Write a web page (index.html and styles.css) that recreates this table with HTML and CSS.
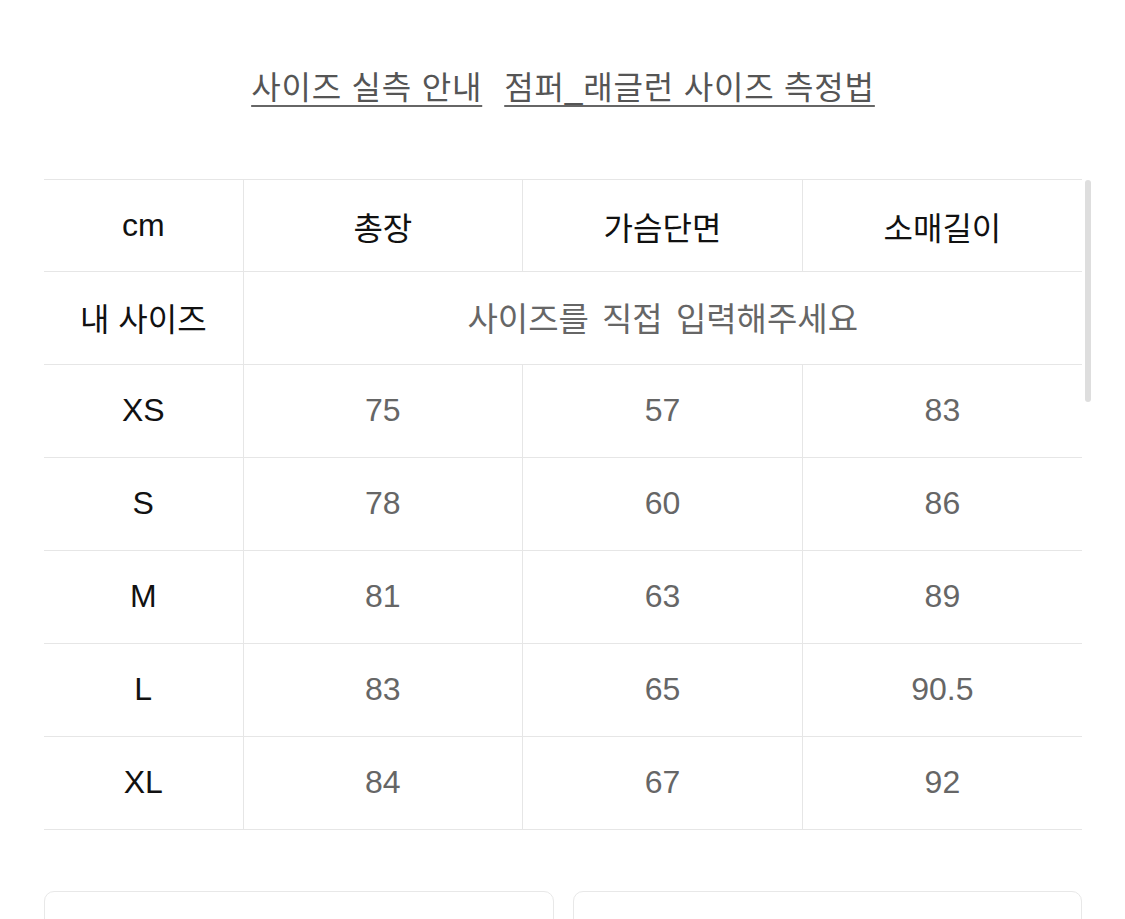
FILE: index.html
```html
<!DOCTYPE html>
<html lang="ko">
<head>
<meta charset="utf-8">
<title>사이즈 실측 안내</title>
<link rel="stylesheet" href="styles.css">
</head>
<body>
<div class="page">
  <nav class="links">
    <a class="link" href="#">사이즈 실측 안내</a>
    <a class="link" href="#">점퍼_래글런 사이즈 측정법</a>
  </nav>
  <div class="table-wrap">
    <table class="size-table">
      <colgroup>
        <col class="col-label">
        <col class="col-val">
        <col class="col-val">
        <col class="col-val">
      </colgroup>
      <tr class="head">
        <th>cm</th><th>총장</th><th>가슴단면</th><th>소매길이</th>
      </tr>
      <tr>
        <th>내 사이즈</th><td colspan="3" class="input">사이즈를 직접 입력해주세요</td>
      </tr>
      <tr><th>XS</th><td>75</td><td>57</td><td>83</td></tr>
      <tr><th>S</th><td>78</td><td>60</td><td>86</td></tr>
      <tr><th>M</th><td>81</td><td>63</td><td>89</td></tr>
      <tr><th>L</th><td>83</td><td>65</td><td>90.5</td></tr>
      <tr><th>XL</th><td>84</td><td>67</td><td>92</td></tr>
    </table>
    <div class="scrollbar"></div>
  </div>
  <div class="boxes">
    <div class="box"></div>
    <div class="box"></div>
  </div>
</div>
</body>
</html>
```

FILE: styles.css
```css
html, body {
  margin: 0;
  padding: 0;
  background: #ffffff;
}
body {
  font-family: "Liberation Sans", "Noto Sans CJK KR", sans-serif;
  overflow: hidden;
}
.page {
  padding: 0 43px 0 44px;
}
.links {
  display: flex;
  justify-content: center;
  gap: 22px;
  padding-top: 65px;
  height: 114px;
  box-sizing: content-box;
  line-height: 46px;
}
.link {
  font-size: 32px;
  color: #555555;
  text-decoration: underline;
  text-decoration-color: #666666;
  text-decoration-thickness: 2px;
  text-underline-offset: 6px;
  letter-spacing: 0.8px;
}
.table-wrap {
  position: relative;
}
.size-table {
  width: 1038px;
  border-collapse: collapse;
  table-layout: fixed;
}
.col-label {
  width: 199px;
}
.size-table th,
.size-table td {
  height: 90px;
  padding: 0 0 2px;
  text-align: center;
  vertical-align: middle;
  font-size: 32px;
  font-weight: normal;
  border: 1px solid #e6e6e6;
}
.size-table tr:first-child > * {
  height: 91px;
  padding: 0;
}
.size-table th {
  color: #111111;
}
.size-table td {
  color: #666666;
}
.size-table tr > :first-child {
  border-left: none;
}
.size-table tr > :last-child {
  border-right: none;
}
.size-table .input {
  font-size: 33px;
  word-spacing: 4px;
}
.scrollbar {
  position: absolute;
  right: -9px;
  top: 1px;
  width: 6px;
  height: 222px;
  border-radius: 3px;
  background: #dedede;
}
.boxes {
  display: grid;
  grid-template-columns: 1fr 1fr;
  gap: 19px;
  margin-top: 61px;
}
.box {
  height: 80px;
  border: 1.5px solid #e8e8e8;
  border-radius: 10px;
}
```
